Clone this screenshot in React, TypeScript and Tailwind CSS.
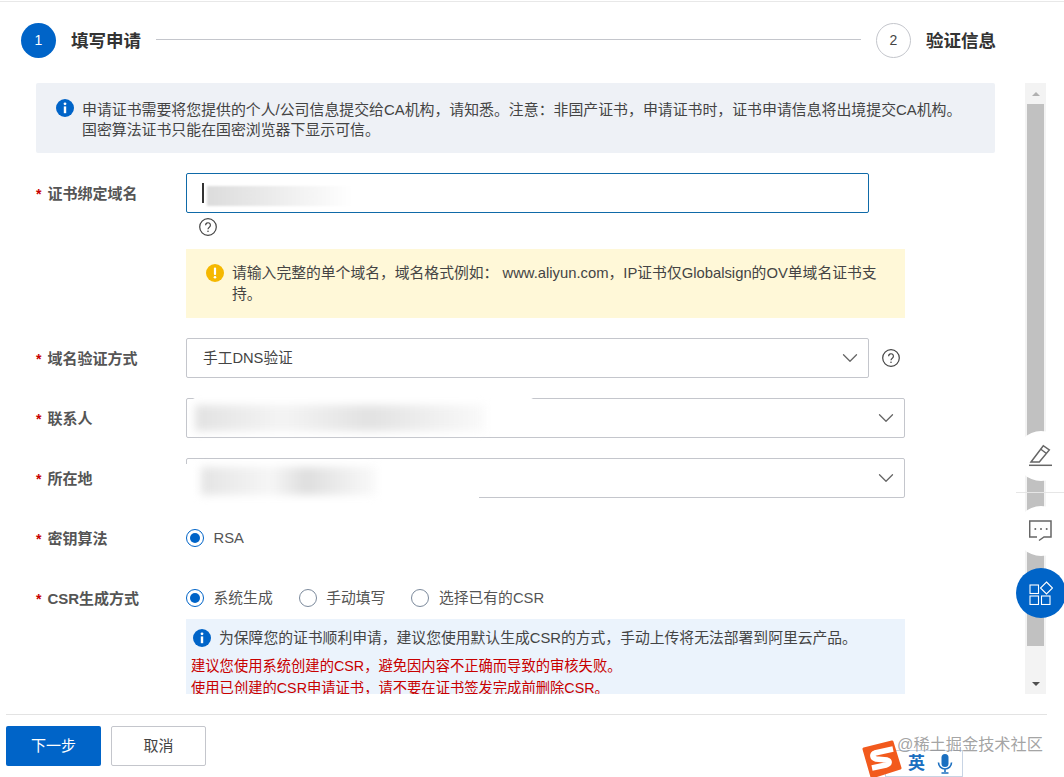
import { ChevronDown } from "lucide-react";
import type { ReactNode } from "react";

const font = "font-['Liberation_Sans','Noto_Sans_CJK_SC',sans-serif]";

function InfoIcon({ size = 18 }: { size?: number }) {
  return (
    <svg width={size} height={size} viewBox="0 0 18 18" className="shrink-0">
      <circle cx="9" cy="9" r="9" fill="#0064c8" />
      <circle cx="9" cy="4.8" r="1.4" fill="#fff" />
      <rect x="7.8" y="7.4" width="2.4" height="6.8" fill="#fff" />
    </svg>
  );
}

function HelpIcon() {
  return (
    <svg width="18" height="18" viewBox="0 0 18 18" className="shrink-0">
      <circle cx="9" cy="9" r="8.3" fill="none" stroke="#444" strokeWidth="1.2" />
      <path d="M6.6 7.2a2.4 2.4 0 1 1 3.7 2c-.9.6-1.3 1-1.3 2" fill="none" stroke="#444" strokeWidth="1.2" />
      <circle cx="9" cy="13.2" r=".8" fill="#444" />
    </svg>
  );
}

function FormRow({ label, children, className }: { label: string; children: ReactNode; className: string }) {
  return (
    <div className={`flex ${className}`}>
      <div className="w-[150px] h-[40px] shrink-0 text-[15px] leading-[42px] font-bold text-[#555]">
        <span className="text-[14px] text-[#c80000] mr-[6px]">*</span>
        {label}
      </div>
      <div className="flex-1 min-w-0">{children}</div>
    </div>
  );
}

function Select({ children, wide }: { children?: ReactNode; wide?: boolean }) {
  return (
    <div
      className={`relative h-[40px] ${wide ? "w-[719px]" : "w-[683px]"} rounded-[2px] border border-[#c4c6cc] flex items-center pl-[16px] text-[14.7px] text-[#444]`}
    >
      {children}
      <ChevronDown size={26} strokeWidth={1.2} className="absolute right-[5px] top-[6px] text-[#666]" />
    </div>
  );
}

function Radio({ label, checked }: { label: string; checked?: boolean }) {
  return (
    <div className="flex items-center gap-[9.5px] text-[14.8px] text-[#555]">
      <span
        className={`w-[18px] h-[18px] rounded-full border flex items-center justify-center ${checked ? "border-[#0064c8]" : "border-[#7c8a9c]"}`}
      >
        {checked && <span className="w-[10px] h-[10px] rounded-full bg-[#0064c8]" />}
      </span>
      {label}
    </div>
  );
}

function Scrollbar() {
  return (
    <div className="w-[21px] h-[611px] bg-[#f3f3f3] flex flex-col items-center shrink-0">
      <div className="h-[21px] w-full flex items-center justify-center">
        <div className="w-0 h-0 border-x-[4px] border-x-transparent border-b-[4px] border-b-[#b0b0b0]" />
      </div>
      <div className="h-[542px] w-[17px] bg-[#c1c1c1]" />
      <div className="flex-1 w-full flex items-end justify-center pb-[8px]">
        <div className="w-0 h-0 border-x-[4px] border-x-transparent border-t-[4px] border-t-[#505050]" />
      </div>
    </div>
  );
}

export default function App() {
  return (
    <div className={`${font} relative w-[1064px] h-[777px] overflow-hidden bg-white`}>
      <div className="h-[1px] mt-[1px] bg-[#e8e8e8]" />

      {/* Steps */}
      <div className="flex items-center h-[34px] mt-[21px] pl-[21px] w-[996px]">
        <div className="w-[35px] h-[35px] rounded-full bg-[#0064c8] text-white text-[14px] flex items-center justify-center">
          1
        </div>
        <span className="ml-[15px] mt-[2px] text-[17.5px] font-bold text-[#333]">填写申请</span>
        <div className="flex-1 h-[1px] bg-[#c4c6cc] ml-[15px] -translate-y-[1px]" />
        <div className="ml-[15px] w-[35px] h-[35px] rounded-full border border-[#c4c6cc] text-[#444] text-[14px] flex items-center justify-center">
          2
        </div>
        <span className="ml-[15px] mt-[2px] text-[17.5px] font-bold text-[#333]">验证信息</span>
      </div>

      {/* Scrollable form */}
      <div className="flex mt-[26px] h-[611px]">
        <div className="w-[1025px] h-[611px] overflow-hidden pl-[36px] pr-[30px]">
          <div className="h-[70px] bg-[#eef1f6] rounded-[2px] flex gap-[8px] pl-[20px] pt-[16px] text-[14.9px] leading-[20px] text-[#444]">
            <InfoIcon />
            <div className="mt-[1px]">
              申请证书需要将您提供的个人/公司信息提交给CA机构，请知悉。注意：非国产证书，申请证书时，证书申请信息将出境提交CA机构。
              <br />
              国密算法证书只能在国密浏览器下显示可信。
            </div>
          </div>

          <FormRow label="证书绑定域名" className="mt-[20px]">
            <div className="relative h-[40px] w-[683px] rounded-[2px] border border-[#0f6aa8] flex items-center pl-[15px]">
              <div className="w-[2px] h-[20px] bg-[#333]" />
              <div className="absolute left-[20px] top-[12px] w-[145px] h-[20px] bg-gradient-to-r from-[#dcdcdc] to-[#ffffff] blur-[1px]" />
            </div>
            <div className="mt-[5px] ml-[13px] h-[18px]">
              <HelpIcon />
            </div>
            <div className="mt-[13px] w-[719px] h-[69px] bg-[#fff8d8] flex gap-[8px] pl-[20px] pt-[14px] text-[14.8px] leading-[21px] text-[#444]">
              <svg width="18" height="18" viewBox="0 0 18 18" className="shrink-0 mt-[1px]">
                <circle cx="9" cy="9" r="9" fill="#f5b800" />
                <rect x="7.9" y="3.6" width="2.2" height="7.4" rx="1" fill="#fff" />
                <circle cx="9" cy="13.2" r="1.3" fill="#fff" />
              </svg>
              <div className="w-[652px]">
                请输入完整的单个域名，域名格式例如： www.aliyun.com，IP证书仅Globalsign的OV单域名证书支持。
              </div>
            </div>
          </FormRow>

          <FormRow label="域名验证方式" className="mt-[20px]">
            <div className="flex items-center gap-[13px]">
              <Select>手工DNS验证</Select>
              <HelpIcon />
            </div>
          </FormRow>

          <FormRow label="联系人" className="mt-[20px]">
            <Select wide>
              <div className="absolute left-[6px] top-[-1px] w-[340px] h-[37px] bg-white rounded-[2px]" />
              <div className="absolute left-[8px] top-[6px] w-[290px] h-[26px] bg-[linear-gradient(90deg,#e2e2e2,#f4f4f4_30%,#e2e2e2_60%,#fafafa)] blur-[4px]" />
            </Select>
          </FormRow>

          <FormRow label="所在地" className="mt-[20px]">
            <Select wide>
              <div className="absolute left-[-1px] top-[5px] w-[293px] h-[36px] bg-white" />
              <div className="absolute left-[14px] top-[8px] w-[175px] h-[28px] bg-[linear-gradient(90deg,#e4e4e4,#f6f6f6_40%,#dedede_60%,#fafafa)] blur-[4px]" />
            </Select>
          </FormRow>

          <FormRow label="密钥算法" className="mt-[20px]">
            <div className="h-[40px] flex items-center">
              <Radio label="RSA" checked />
            </div>
          </FormRow>

          <FormRow label="CSR生成方式" className="mt-[20px]">
            <div className="h-[40px] flex items-center gap-[26px]">
              <Radio label="系统生成" checked />
              <Radio label="手动填写" />
              <Radio label="选择已有的CSR" />
            </div>
            <div className="mt-[1px] w-[719px] h-[120px] bg-[#ebf3fc] pl-[5px] pt-[10px] text-[14.3px] leading-[22px]">
              <div className="flex items-center gap-[8px] pl-[2px] text-[14.8px] text-[#444] h-[18px]">
                <InfoIcon />
                为保障您的证书顺利申请，建议您使用默认生成CSR的方式，手动上传将无法部署到阿里云产品。
              </div>
              <div className="mt-[8px] text-[#c80000]">建议您使用系统创建的CSR，避免因内容不正确而导致的审核失败。</div>
              <div className="text-[#c80000]">使用已创建的CSR申请证书，请不要在证书签发完成前删除CSR。</div>
            </div>
          </FormRow>
        </div>
        <Scrollbar />
      </div>

      {/* Footer */}
      <div className="h-[1px] mt-[20px] ml-[6px] w-[1041px] bg-[#e3e3e3]" />
      <div className="flex gap-[10px] mt-[11px] ml-[6px]">
        <button className="w-[95px] h-[40px] rounded-[2px] bg-[#0064c8] text-white text-[15px]">下一步</button>
        <button className="w-[95px] h-[40px] rounded-[2px] border border-[#c4c6cc] text-[#444] text-[15px]">取消</button>
      </div>

      {/* Floating tools */}
      <div className="absolute left-[1016px] top-[492px] w-[48px] h-[1px] bg-[#e6e6e6]" />
      <div className="absolute left-[1016px] top-[431px] w-[50px] h-[50px] rounded-full bg-white flex items-center justify-center">
        <svg width="24" height="24" viewBox="0 0 24 24" fill="none" stroke="#666" strokeWidth="1.5">
          <path d="M2 18 14.300 1.700 20.300 6 10.300 18z" />
          <path d="M11.500 5l6 4.500" />
          <path d="M0 21.300h23" />
        </svg>
      </div>
      <div className="absolute left-[1016px] top-[506px] w-[50px] h-[50px] rounded-full bg-white flex items-center justify-center">
        <svg width="24" height="24" viewBox="0 0 24 24" fill="none" stroke="#666" strokeWidth="1.500">
          <path d="M8 18H.700V2H22v16h-7l-5 3.500" />
          <circle cx="6.300" cy="10" r="1" fill="#666" stroke="none" />
          <circle cx="12" cy="10" r="1" fill="#666" stroke="none" />
          <circle cx="17.700" cy="10" r="1" fill="#666" stroke="none" />
        </svg>
      </div>
      <div className="absolute left-[1016px] top-[568px] w-[50px] h-[50px] rounded-full bg-[#0064c8] flex items-center justify-center">
        <svg width="24" height="24" viewBox="0 0 24 24" fill="none" stroke="#fff" strokeWidth="1.100">
          <rect x="1" y="4" width="8.500" height="8.500" />
          <rect x="1" y="15" width="8.500" height="8.500" />
          <rect x="12.500" y="15" width="8.500" height="8.500" />
          <path d="M17.500 1l6 6-6 6-6-6z" />
        </svg>
      </div>

      {/* Sogou IME bar and watermark */}
      <div className="absolute left-[885px] top-[750px] w-[78px] h-[27px] border border-[#c8d4e4] bg-white flex items-center pl-[22px] gap-[14px] text-[17px] font-bold text-[#1a6fc0]">
        英
        <svg width="16" height="22" viewBox="0 0 16 22" className="-ml-[2px]">
          <rect x="4.500" y="1" width="7" height="13" rx="3.500" fill="#1a6fc0" />
          <path d="M1.500 9.500a6.500 6.500 0 0 0 13 0M8 16v3M4.500 20h7" fill="none" stroke="#1a6fc0" strokeWidth="1.600" />
        </svg>
      </div>
      <svg width="42" height="38" viewBox="0 0 42 38" className="absolute left-[861px] top-[740px]">
        <path d="M3 9 31 2l8 26-28 9z" fill="#f25a1d" stroke="#f25a1d" strokeWidth="3" strokeLinejoin="round" />
        <path d="M32 9 14 13c-3 1-3 5 1 6l11 1c3 1 3 4-1 5l-14 3" fill="none" stroke="#fff" strokeWidth="5.500" />
      </svg>
      <div className="absolute left-[897px] top-[733px] text-[16.2px] leading-[22px] text-[#8c8c8c]/80">@稀土掘金技术社区</div>
    </div>
  );
}
